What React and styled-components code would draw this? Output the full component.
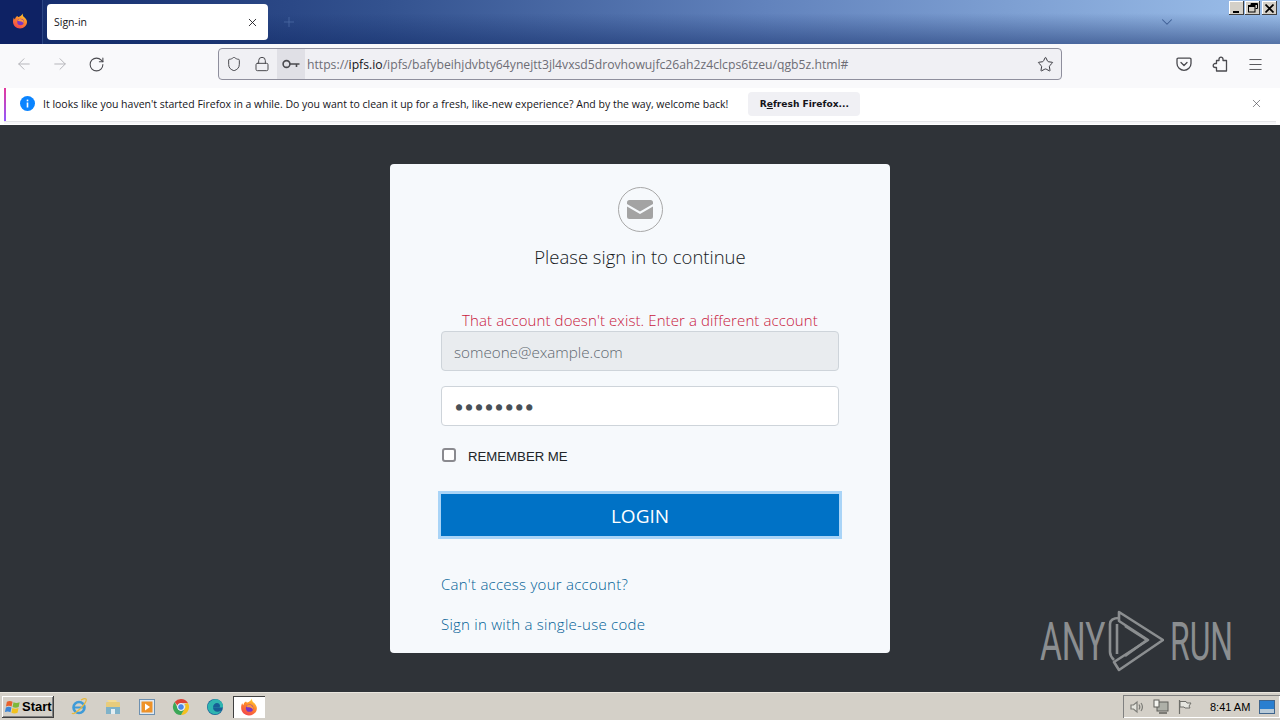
import styled, { createGlobalStyle } from "styled-components";
import { ArrowLeft, ArrowRight, RotateCw, Lock, Star, Menu, X, Plus, ChevronDown, Shield } from "lucide-react";

const GlobalStyle = createGlobalStyle`
  html, body { margin: 0; padding: 0; }
  body { width: 1280px; height: 720px; overflow: hidden; font-family: "Open Sans", "Liberation Sans", sans-serif; }
`;

const FirefoxLogo = ({ size = 16 }) => (
  <svg width={size} height={size} viewBox="0 0 32 32">
    <defs>
      <linearGradient id="ffOuter" x1="0.7" y1="0" x2="0.2" y2="1">
        <stop offset="0" stopColor="#ffd02e" />
        <stop offset="0.4" stopColor="#ff8a2a" />
        <stop offset="1" stopColor="#f2404f" />
      </linearGradient>
    </defs>
    <path d="M21 1c1 3 0 5 3 7 4 3 6 7 6 10 0 7-6 13-14 13S2 25 2 17c0-3 1-6 2-8 0 2 1 3 2 4 0-3 2-6 5-7 0 1 1 2 2 2 3-1 7-3 8-7z" fill="url(#ffOuter)" />
    <circle cx="17" cy="18" r="6.500" fill="#7a35c4" />
    <path d="M11 15c2-3 6-4 9-2 3 2 4 5 3 8-1-3-4-4.500-7-4.500-2 0-4-.5-5-1.500z" fill="#ff9a3c" />
  </svg>
);

const MailBadge = () => (
  <svg width="26" height="19" viewBox="0 0 26 19">
    <path d="M2.500 0h21A2.500 2.500 0 0 1 26 2.500V4L13 11.500 0 4V2.500A2.500 2.500 0 0 1 2.500 0z" fill="#a3a3a3" />
    <path d="M0 6.500l13 7.500 13-7.500v10a2.500 2.500 0 0 1-2.500 2.500h-21A2.500 2.500 0 0 1 0 16.500z" fill="#a3a3a3" />
  </svg>
);

const KeyIcon = () => (
  <svg width="18" height="10" viewBox="0 0 18 10" fill="none" stroke="#4a4a4f" strokeWidth="1.600">
    <circle cx="4.500" cy="5" r="3.400" />
    <path d="M8 5h9.500M14.500 5v3" />
  </svg>
);

const InfoIcon = () => (
  <svg width="15" height="15" viewBox="0 0 15 15">
    <circle cx="7.500" cy="7.500" r="7.500" fill="#0a84ff" />
    <rect x="6.700" y="6.500" width="1.600" height="5" fill="#fff" />
    <rect x="6.700" y="3.600" width="1.600" height="1.700" fill="#fff" />
  </svg>
);

const PocketIcon = () => (
  <svg width="16" height="16" viewBox="0 0 16 16" fill="none" stroke="#4a4a4f" strokeWidth="1.300" strokeLinecap="round" strokeLinejoin="round">
    <path d="M2.200 2.200h11.600a1.200 1.200 0 0 1 1.200 1.200v4A7 7 0 0 1 8 14.300 7 7 0 0 1 1 7.400V3.400a1.200 1.200 0 0 1 1.200-1.200z" />
    <path d="M5 6.500l3 3 3-3" />
  </svg>
);

const ExtensionIcon = () => (
  <svg width="16" height="16" viewBox="0 0 16 16" fill="none" stroke="#4a4a4f" strokeWidth="1.300" strokeLinejoin="round">
    <path d="M9 1.200a2 2 0 0 0-2 2v1.300H4.500v3H3.200a2 2 0 0 0 0 4h1.300v3.500h10v-10.500H11V3.200a2 2 0 0 0-2-2z" />
  </svg>
);

const WinFlag = () => (
  <svg width="17" height="16" viewBox="0 0 18 16">
    <path d="M2 2.500c2-1 4-1 6 0l-1 5c-2-1-4-1-6 0z" fill="#e8612c" />
    <path d="M9 3c2 1 4 1 6.500 0l-1 5c-2 1-4.500 1-6.500 0z" fill="#7eb83a" />
    <path d="M1 8.500c2-1 4-1 5.800 0l-1 5c-2-1-4-1-6 0z" fill="#3d86d6" />
    <path d="M7.800 9c2 1 4.500 1 6.500 0l-1 5c-2 1-4.500 1-6.500 0z" fill="#f2c21e" />
  </svg>
);

const IeIcon = () => (
  <svg width="18" height="18" viewBox="0 0 18 18" fill="none">
    <circle cx="9" cy="9.500" r="5.500" stroke="#3f9bd8" strokeWidth="2.600" />
    <path d="M4 9.500h10" stroke="#3f9bd8" strokeWidth="2" />
    <path d="M2 15c1 2 5-1 9-5s6-8 5-9c-1-.8-3 0-5 1" stroke="#e8b93a" strokeWidth="1.200" />
  </svg>
);

const FolderIcon = () => (
  <svg width="18" height="18" viewBox="0 0 18 18">
    <path d="M3 2h9l1 2H5z" fill="#f3dc97" />
    <rect x="2" y="4" width="14" height="12" rx="1" fill="#e8cc7c" />
    <rect x="2" y="9" width="14" height="7" fill="#7fb2c9" />
    <rect x="7" y="11" width="4" height="5" fill="#e4eef2" />
  </svg>
);

const MediaIcon = () => (
  <svg width="18" height="18" viewBox="0 0 18 18">
    <rect x="1.500" y="1.500" width="15" height="15" fill="#dfe9f3" stroke="#6d90b0" />
    <rect x="3.500" y="3.500" width="11" height="11" fill="#ee9228" />
    <path d="M7 5.500l5 3.500-5 3.500z" fill="#fff" />
  </svg>
);

const ChromeIcon = () => (
  <svg width="18" height="18" viewBox="0 0 18 18">
    <path d="M9 1a8 8 0 0 1 6.930 4H9a4 4 0 0 0-3.600 2.300L2.700 4A8 8 0 0 1 9 1z" fill="#dc4437" />
    <path d="M15.930 5A8 8 0 0 1 9 17l3.400-5.900A4 4 0 0 0 12.500 6z" fill="#f4c020" />
    <path d="M9 17A8 8 0 0 1 2.700 4l3.400 7a4 4 0 0 0 6 .6z" fill="#3ba757" />
    <circle cx="9" cy="9" r="3.400" fill="#4a87e8" stroke="#fff" strokeWidth="1" />
  </svg>
);

const EdgeIcon = () => (
  <svg width="18" height="18" viewBox="0 0 18 18">
    <circle cx="9" cy="9" r="8" fill="#175f96" />
    <path d="M1.500 8C3 2.500 9 0 13 2c3 1.500 4.500 4.500 4 7.500H7c0 3 3 5 6 4 1-.3 2-.8 2.500-1.500-1.500 3.500-5 5-8 4C3.500 15 1.500 12 1.500 8z" fill="#2fb5b0" />
    <path d="M7 9.500c0-3 2-4.500 4-4.500 2 0 3 1.500 3 3l-.5 1.500z" fill="#175f96" />
  </svg>
);

const SpeakerIcon = () => (
  <svg width="16" height="16" viewBox="0 0 16 16" fill="none" stroke="#7d7d78" strokeWidth="1.200">
    <path d="M2 6h2.500L8 3v10L4.500 10H2z" fill="#e4e4de" />
    <path d="M10 5.500c1 1.500 1 3.500 0 5M12 4c1.800 2.500 1.800 5.500 0 8" />
  </svg>
);

const NetworkIcon = () => (
  <svg width="18" height="16" viewBox="0 0 18 16">
    <rect x="5" y="3" width="11" height="9" fill="#aeb0a8" stroke="#5f5f5a" />
    <rect x="2" y="1" width="5" height="7" fill="#f5f5f0" stroke="#5f5f5a" />
    <path d="M7 14h8" stroke="#5f5f5a" strokeWidth="1.500" />
  </svg>
);

const FlagIcon = () => (
  <svg width="16" height="16" viewBox="0 0 16 16" fill="none" stroke="#6f6f6a">
    <path d="M2.500 1v14" strokeWidth="1.200" />
    <path d="M3 2.500h6l1 1.500h4l-2 3 1 2H8L7 8H3z" fill="#e6e6e0" />
  </svg>
);

const DesktopIcon = () => (
  <svg width="16" height="14" viewBox="0 0 16 14">
    <rect x="0.500" y="0.500" width="15" height="13" fill="#2a7fd0" stroke="#3e648c" />
    <rect x="1" y="9" width="14" height="4" fill="#b9cbd8" />
  </svg>
);

const RunMark = () => (
  <svg width="56" height="62" viewBox="0 0 56 62" fill="none" stroke="#8b8e90" strokeWidth="2.600" strokeLinejoin="round">
    <path d="M11 8C5 8 2 10 2 14v28c0 4 2 6 4 8" />
    <path d="M11 2l44 28-44 30-5-8 34-22L11 11z" />
    <path d="M17 16l22 14-22 16" />
    <path d="M9 14v30" />
  </svg>
);

const TASK_ICONS = [IeIcon, FolderIcon, MediaIcon, ChromeIcon, EdgeIcon];

const App = () => (
  <Screen>
    <GlobalStyle />
    <TabStrip>
      <FirefoxButton><FirefoxLogo /></FirefoxButton>
      <Tab>
        <TabTitle>Sign-in</TabTitle>
        <X size={13} color="#15141a" strokeWidth={1.6} />
      </Tab>
      <NewTab><Plus size={16} strokeWidth={1.2} /></NewTab>
      <Spacer />
      <TabList><ChevronDown size={18} strokeWidth={1.4} /></TabList>
      <WindowControls>
        <WinButton>
          <svg width="9" height="9" viewBox="0 0 9 9"><rect x="1" y="7" width="6" height="2" fill="#000" /></svg>
        </WinButton>
        <WinButton>
          <svg width="10" height="10" viewBox="0 0 10 10" fill="none" stroke="#000"><path d="M3 2.500V.5h6.500v5H7.500" /><rect x="0.500" y="2.500" width="6.500" height="6.500" /><path d="M0 3.500h7M3 1.500h6.500" /></svg>
        </WinButton>
        <WinButton $close>
          <svg width="9" height="9" viewBox="0 0 9 9" stroke="#000" strokeWidth="1.700"><path d="M.5.5l8 8M8.500.5l-8 8" /></svg>
        </WinButton>
      </WindowControls>
    </TabStrip>

    <NavBar>
      <NavIcons>
        <NavButton $dim><ArrowLeft size={18} strokeWidth={1.3} /></NavButton>
        <NavButton $dim><ArrowRight size={18} strokeWidth={1.3} /></NavButton>
        <NavButton><RotateCw size={17} strokeWidth={1.5} /></NavButton>
      </NavIcons>
      <UrlBar>
        <UrlIcon><Shield size={16} strokeWidth={1.5} /></UrlIcon>
        <UrlIcon><Lock size={16} strokeWidth={1.5} /></UrlIcon>
        <KeyBox><KeyIcon /></KeyBox>
        <UrlText>https://<b>ipfs.io</b>/ipfs/bafybeihjdvbty64ynejtt3jl4vxsd5drovhowujfc26ah2z4clcps6tzeu/qgb5z.html#</UrlText>
        <Star size={17} strokeWidth={1.4} color="#3a3a40" />
      </UrlBar>
      <ToolIcons>
        <PocketIcon />
        <ExtensionIcon />
        <Menu size={17} strokeWidth={1.3} color="#4a4a4f" />
      </ToolIcons>
    </NavBar>

    <InfoBar>
      <InfoIcon />
      <InfoText>It looks like you haven't started Firefox in a while. Do you want to clean it up for a fresh, like-new experience? And by the way, welcome back!</InfoText>
      <RefreshButton>R<u>e</u>fresh Firefox...</RefreshButton>
      <Spacer />
      <X size={13} strokeWidth={1.1} color="#3a3a40" />
    </InfoBar>

    <Page>
      <Card>
        <IconCircle><MailBadge /></IconCircle>
        <Heading>Please sign in to continue</Heading>
        <ErrorText>That account doesn't exist. Enter a different account</ErrorText>
        <Field $disabled readOnly placeholder="someone@example.com" />
        <Field $secret type="password" defaultValue="12345678" />
        <RememberRow>
          <CheckBox type="checkbox" />
          <RememberLabel>REMEMBER ME</RememberLabel>
        </RememberRow>
        <LoginButton>LOGIN</LoginButton>
        <CardLink href="#">Can't access your account?</CardLink>
        <CardLink href="#">Sign in with a single-use code</CardLink>
      </Card>
      <Watermark>
        <WatermarkWord $scale={0.62}>ANY</WatermarkWord>
        <RunMark />
        <WatermarkWord $scale={0.59}>RUN</WatermarkWord>
      </Watermark>
    </Page>

    <Taskbar>
      <StartButton><WinFlag />Start</StartButton>
      <QuickLaunch>
        {TASK_ICONS.map((Icon, i) => <TaskSlot key={i}><Icon /></TaskSlot>)}
        <ActiveTask><FirefoxLogo size={18} /></ActiveTask>
      </QuickLaunch>
      <Spacer />
      <Tray>
        <SpeakerIcon />
        <NetworkIcon />
        <FlagIcon />
        <Clock>8:41 AM</Clock>
        <DesktopIcon />
      </Tray>
    </Taskbar>
  </Screen>
);

export default App;

const Screen = styled.div`
  width: 1280px;
  height: 720px;
  display: flex;
  flex-direction: column;
  overflow: hidden;
`;

const Spacer = styled.div`
  flex: 1;
`;

const TabStrip = styled.div`
  height: 44px;
  flex: none;
  display: flex;
  align-items: flex-start;
  background:
    linear-gradient(180deg, rgba(15, 40, 100, 0) 30%, rgba(15, 40, 100, 0.5) 100%),
    linear-gradient(90deg, #12296a 0%, #33528f 30%, #6283bd 60%, #9cbfea 100%);
`;

const FirefoxButton = styled.div`
  width: 43px;
  height: 44px;
  flex: none;
  display: flex;
  align-items: center;
  justify-content: center;
  padding: 0 2px 2px 0;
  box-sizing: border-box;
  background: #0e2264;
  border-right: 1px solid #2c4684;
`;

const Tab = styled.div`
  width: 221px;
  height: 36px;
  margin: 4px 0 0 4px;
  padding: 0 9px 0 7px;
  box-sizing: border-box;
  display: flex;
  align-items: center;
  justify-content: space-between;
  background: #fff;
  border-radius: 4px;
`;

const TabTitle = styled.span`
  font: 10.5px "Open Sans", sans-serif;
  color: #15141a;
`;

const NewTab = styled.div`
  margin: 14px 0 0 13px;
  color: #4c6ba3;
  display: flex;
`;

const TabList = styled.div`
  margin: 13px 53px 0 0;
  color: #3f5f95;
  display: flex;
`;

const WindowControls = styled.div`
  margin: 1px 3px 0 0;
  display: flex;
  gap: 1px;
`;

const WinButton = styled.div`
  width: 15px;
  height: 14px;
  margin-left: ${(p) => (p.$close ? "1px" : "0")};
  display: flex;
  align-items: center;
  justify-content: center;
  background: #d4d0c8;
  box-shadow: inset -1px -1px 0 #404040, inset 1px 1px 0 #fff;
`;

const NavBar = styled.div`
  height: 44px;
  flex: none;
  display: flex;
  align-items: flex-start;
  padding-top: 4px;
  box-sizing: border-box;
  background: #f9f9fb;
`;

const NavIcons = styled.div`
  width: 218px;
  height: 32px;
  padding-left: 6px;
  box-sizing: border-box;
  display: flex;
  align-items: center;
`;

const NavButton = styled.div`
  width: 36px;
  display: flex;
  justify-content: center;
  color: ${(p) => (p.$dim ? "#b4b4b9" : "#4a4a4f")};
`;

const UrlBar = styled.div`
  width: 844px;
  height: 32px;
  box-sizing: border-box;
  display: flex;
  align-items: center;
  padding: 0 7px 0 0;
  background: #f0f0f4;
  border: 1px solid #8f8f9d;
  border-radius: 4px;
`;

const UrlIcon = styled.div`
  width: 28px;
  display: flex;
  justify-content: center;
  color: #4a4a4f;
  &:first-child { margin-left: 1px; }
  &:nth-child(2) { margin-right: 1px; }
`;

const KeyBox = styled.div`
  width: 28px;
  height: 30px;
  display: flex;
  align-items: center;
  justify-content: center;
  background: #e0e0e6;
`;

const UrlText = styled.div`
  flex: 1;
  margin-left: 2px;
  font: 12.2px "Open Sans", sans-serif;
  color: #6d6d75;
  white-space: nowrap;
  b { font-weight: 400; color: #15141a; }
`;

const ToolIcons = styled.div`
  flex: 1;
  height: 32px;
  padding: 0 16px 0 114px;
  box-sizing: border-box;
  display: flex;
  align-items: center;
  justify-content: space-between;
`;

const InfoBar = styled.div`
  height: 33px;
  flex: none;
  box-sizing: border-box;
  margin: 0 4px 4px;
  padding: 0 13px 2px 14px;
  display: flex;
  align-items: center;
  background: #fff;
  border-left: 2px solid;
  border-image: linear-gradient(180deg, #e6379a, #9059ff) 1;
  box-shadow: 0 1px 0 #e4e4e7, 0 3px 0 #f6f6f8;
`;

const InfoText = styled.span`
  margin-left: 8px;
  font: 10.5px "Open Sans", sans-serif;
  color: #15141a;
  white-space: nowrap;
`;

const RefreshButton = styled.div`
  margin-left: 20px;
  width: 112px;
  height: 24px;
  text-align: center;
  font: bold 9.1px/25px "DejaVu Sans", sans-serif;
  color: #15141a;
  background: #f0f0f4;
  border-radius: 4px;
`;

const Page = styled.main`
  position: relative;
  flex: 1;
  display: flex;
  justify-content: center;
  align-items: flex-start;
  padding-top: 39px;
  box-sizing: border-box;
  background: #2f3338;
`;

const Card = styled.div`
  width: 500px;
  height: 489px;
  padding: 23px 51px 0;
  box-sizing: border-box;
  display: flex;
  flex-direction: column;
  background: #f6f9fc;
  border-radius: 4px;
`;

const IconCircle = styled.div`
  width: 45px;
  height: 45px;
  flex: none;
  align-self: center;
  display: flex;
  align-items: center;
  justify-content: center;
  box-sizing: border-box;
  border: 1px solid #a8a8a8;
  border-radius: 50%;
`;

const Heading = styled.h1`
  margin: 12px 0 0;
  font: 300 18.5px/26px "Open Sans", sans-serif;
  color: #15181b;
  text-align: center;
`;

const ErrorText = styled.div`
  margin-top: 39px;
  font: 300 15px/22px "Open Sans", sans-serif;
  letter-spacing: 0.1px;
  color: #c8183c;
  text-align: center;
  white-space: nowrap;
`;

const Field = styled.input`
  width: 100%;
  height: 40px;
  flex: none;
  margin-bottom: 15px;
  padding: ${(p) => (p.$secret ? "4px 12px 0" : "2px 12px 0")};
  box-sizing: border-box;
  font: ${(p) => (p.$secret ? `17px "DejaVu Sans", sans-serif` : `300 15.2px "Open Sans", sans-serif`)};
  -webkit-text-stroke: ${(p) => (p.$secret ? "1.2px #495057" : "0")};
  color: #495057;
  background: ${(p) => (p.$disabled ? "#e9ecef" : "#fff")};
  border: 1px solid #ced4da;
  border-radius: 4px;
  outline: none;
  &::placeholder { color: #5f6870; opacity: 1; }
`;

const RememberRow = styled.label`
  height: 30px;
  display: flex;
  align-items: center;
  gap: 12px;
`;

const CheckBox = styled.input`
  appearance: none;
  width: 14px;
  height: 14px;
  margin: 0 0 2px 1px;
  box-sizing: border-box;
  background: #fff;
  border: 2px solid #8a8a8f;
  border-radius: 3px;
`;

const RememberLabel = styled.span`
  font: 13.2px "Liberation Sans", sans-serif;
  color: #212529;
`;

const LoginButton = styled.button`
  width: 398px;
  height: 42px;
  flex: none;
  margin-top: 23px;
  padding: 1px 0 0;
  font: 19px "Open Sans", sans-serif;
  color: #fff;
  background: #0072c6;
  border: none;
  outline: 3px solid #a9d4f7;
  outline-offset: 0;
`;

const CardLink = styled.a`
  display: block;
  margin-top: 16px;
  font: 300 15px/24px "Open Sans", sans-serif;
  letter-spacing: 0.25px;
  color: #005f96;
  text-decoration: none;
  &:first-of-type { margin-top: 36px; }
`;

const Watermark = styled.div`
  position: absolute;
  left: 1040px;
  top: 485px;
  width: 192px;
  height: 62px;
  display: flex;
  align-items: center;
  justify-content: space-between;
`;

const WatermarkWord = styled.span`
  width: 62px;
  margin-top: 2px;
  display: block;
  font: 400 54px/62px "Roboto", sans-serif;
  color: #8b8e90;
  white-space: nowrap;
  transform: scaleX(${(p) => p.$scale});
  transform-origin: left center;
`;

const Taskbar = styled.footer`
  height: 28px;
  flex: none;
  display: flex;
  align-items: center;
  box-sizing: border-box;
  background: #d4d0c8;
  border-top: 1px solid #e9e6df;
`;

const StartButton = styled.div`
  width: 52px;
  height: 22px;
  margin-left: 2px;
  padding-left: 3px;
  display: flex;
  align-items: center;
  gap: 0;
  box-sizing: border-box;
  font: bold 13px "Liberation Sans", sans-serif;
  color: #000;
  background: #d4d0c8;
  box-shadow: inset -1px -1px 0 #404040, inset 1px 1px 0 #fff, inset -2px -2px 0 #808080;
`;

const QuickLaunch = styled.div`
  margin-left: 8px;
  display: flex;
  align-items: center;
`;

const TaskSlot = styled.div`
  width: 34px;
  display: flex;
  justify-content: center;
`;

const ActiveTask = styled.div`
  width: 32px;
  height: 22px;
  margin-left: 1px;
  display: flex;
  align-items: center;
  justify-content: center;
  background: #fff;
  box-shadow: inset 1px 1px 0 #404040, inset -1px -1px 0 #fff;
`;

const Tray = styled.div`
  width: 157px;
  height: 23px;
  padding: 0 3px 0 6px;
  box-sizing: border-box;
  display: flex;
  align-items: center;
  gap: 7px;
  box-shadow: inset 1px 1px 0 #808080, inset -1px -1px 0 #fff;
`;

const Clock = styled.span`
  margin: 0 2px 0 10px;
  font: 11px "Liberation Sans", sans-serif;
  color: #000;
  white-space: nowrap;
`;
